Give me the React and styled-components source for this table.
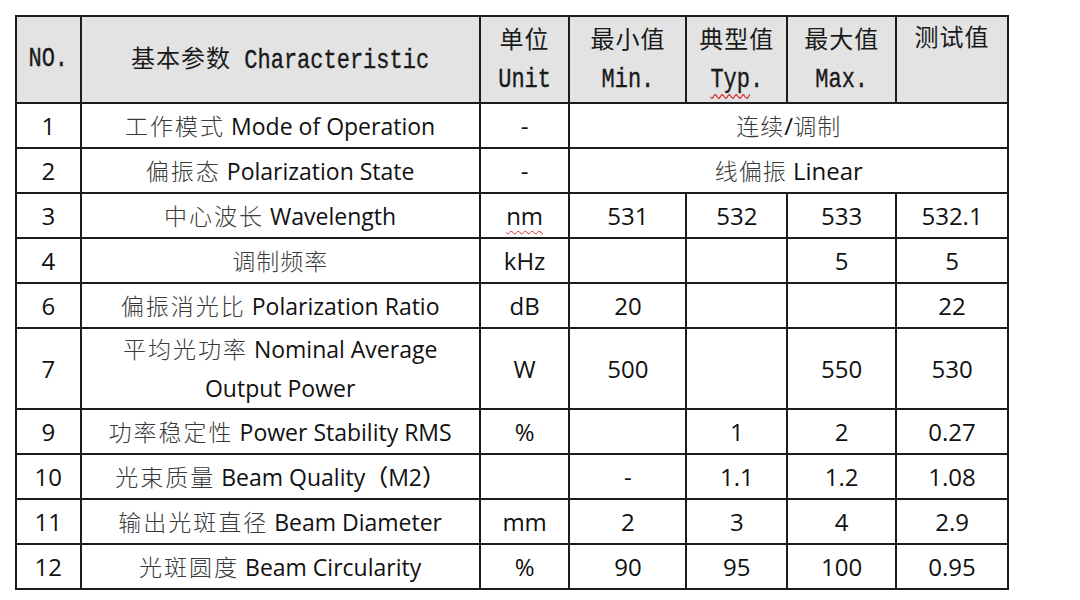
import React from 'react'
import styled, { createGlobalStyle } from 'styled-components'

const GlobalStyle = createGlobalStyle`
  html, body {
    margin: 0;
    background: #ffffff;
  }
  body {
    padding: 15px 0 0 15px;
  }
`

const SpecTable = styled.table`
  border-collapse: collapse;
  table-layout: fixed;
  width: 994px;
  font-family: "Open Sans", "Noto Sans CJK SC", sans-serif;
  color: #111;
`

// border-collapse adds half of each 2px border to the column, so take it off here
const Col = styled.col`
  width: ${p => p.$w - 2}px;
`

const HeadRow = styled.tr`
  height: 87px;
  background: #e3e3e3;
`

const Row = styled.tr`
  height: ${p => p.$h || 45}px;
`

const Th = styled.th`
  border: 2px solid #1c1c1c;
  font-family: "Liberation Mono", "Noto Sans CJK SC", monospace;
  font-weight: 400;
  font-size: 22px;
  line-height: 38px;
  color: #1a1a1a;
  text-align: center;
  vertical-align: ${p => (p.$top ? 'top' : 'middle')};
  padding: 0;
  overflow: hidden;
`

const Mono = styled.span`
  display: inline-block;
  transform: scaleY(1.25);
  -webkit-text-stroke: 0.3px #1a1a1a;
`

const ThZh = styled.span`
  font-family: "Noto Sans CJK SC", sans-serif;
  font-size: 24px;
  letter-spacing: 1px;
`

const Typo = styled.span`
  text-decoration: underline wavy #d83030;
  text-decoration-thickness: 1px;
  text-underline-offset: 5px;
`

const Td = styled.td`
  border: 2px solid #1c1c1c;
  font-size: 24px;
  font-weight: 500;
  line-height: 39px;
  text-align: center;
  vertical-align: middle;
  padding: 0;
  color: #111;
  white-space: nowrap;
`

const NameCell = styled(Td)`
  font-size: 23px;
`

const Zh = styled.span`
  font-family: "Noto Sans CJK SC", sans-serif;
  font-size: 23px;
  font-weight: 300;
  color: #3a3a3a;
  margin-right: 6px;
  letter-spacing: 2px;
`

const ZhPlain = styled(Zh)`
  margin-right: 0;
  letter-spacing: 1px;
`

const cols = [66, 398, 91, 118, 102, 110, 113]

const rows = [
  { no: '1', zh: '工作模式', en: 'Mode of Operation', unit: '-', span: ['连续', '/', '调制'] },
  { no: '2', zh: '偏振态', en: 'Polarization State', unit: '-', span: ['线偏振', ' Linear'] },
  { no: '3', zh: '中心波长', en: 'Wavelength', unit: 'nm', vals: ['531', '532', '533', '532.1'] },
  { no: '4', zh: '调制频率', en: '', unit: 'kHz', vals: ['', '', '5', '5'] },
  { no: '6', zh: '偏振消光比', en: 'Polarization Ratio', unit: 'dB', vals: ['20', '', '', '22'] },
  { no: '7', zh: '平均光功率', en: 'Nominal Average', en2: 'Output Power', unit: 'W', vals: ['500', '', '550', '530'], h: 81 },
  { no: '9', zh: '功率稳定性', en: 'Power Stability RMS', unit: '%', vals: ['', '1', '2', '0.27'] },
  { no: '10', zh: '光束质量', en: 'Beam Quality（M2）', unit: '', vals: ['-', '1.1', '1.2', '1.08'] },
  { no: '11', zh: '输出光斑直径', en: 'Beam Diameter', unit: 'mm', vals: ['2', '3', '4', '2.9'] },
  { no: '12', zh: '光斑圆度', en: 'Beam Circularity', unit: '%', vals: ['90', '95', '100', '0.95'] },
]

function SpanValue({ parts }) {
  if (parts.length === 3) {
    return (
      <>
        <ZhPlain>{parts[0]}</ZhPlain>
        {parts[1]}
        <ZhPlain>{parts[2]}</ZhPlain>
      </>
    )
  }
  return (
    <>
      <ZhPlain>{parts[0]}</ZhPlain>
      {parts[1]}
    </>
  )
}

function App() {
  return (
    <>
      <GlobalStyle />
      <SpecTable>
        <colgroup>
          {cols.map((w, i) => (
            <Col key={i} $w={w} />
          ))}
        </colgroup>
        <thead>
          <HeadRow>
            <Th>
              <Mono>NO.</Mono>
            </Th>
            <Th>
              <ThZh>基本参数</ThZh> <Mono>Characteristic</Mono>
            </Th>
            <Th>
              <ThZh>单位</ThZh>
              <br />
              <Mono>Unit</Mono>
            </Th>
            <Th>
              <ThZh>最小值</ThZh>
              <br />
              <Mono>Min.</Mono>
            </Th>
            <Th>
              <ThZh>典型值</ThZh>
              <br />
              <Mono>
                <Typo>Typ</Typo>.
              </Mono>
            </Th>
            <Th>
              <ThZh>最大值</ThZh>
              <br />
              <Mono>Max.</Mono>
            </Th>
            <Th $top>
              <ThZh>测试值</ThZh>
            </Th>
          </HeadRow>
        </thead>
        <tbody>
          {rows.map(r => (
            <Row key={r.no} $h={r.h}>
              <Td>{r.no}</Td>
              <NameCell>
                {r.en ? (
                  <>
                    <Zh>{r.zh}</Zh>
                    {r.en}
                    {r.en2 && (
                      <>
                        <br />
                        {r.en2}
                      </>
                    )}
                  </>
                ) : (
                  <ZhPlain>{r.zh}</ZhPlain>
                )}
              </NameCell>
              <Td>{r.unit === 'nm' ? <Typo>nm</Typo> : r.unit}</Td>
              {r.span ? (
                <Td colSpan={4}>
                  <SpanValue parts={r.span} />
                </Td>
              ) : (
                r.vals.map((v, i) => <Td key={i}>{v}</Td>)
              )}
            </Row>
          ))}
        </tbody>
      </SpecTable>
    </>
  )
}

export default App
